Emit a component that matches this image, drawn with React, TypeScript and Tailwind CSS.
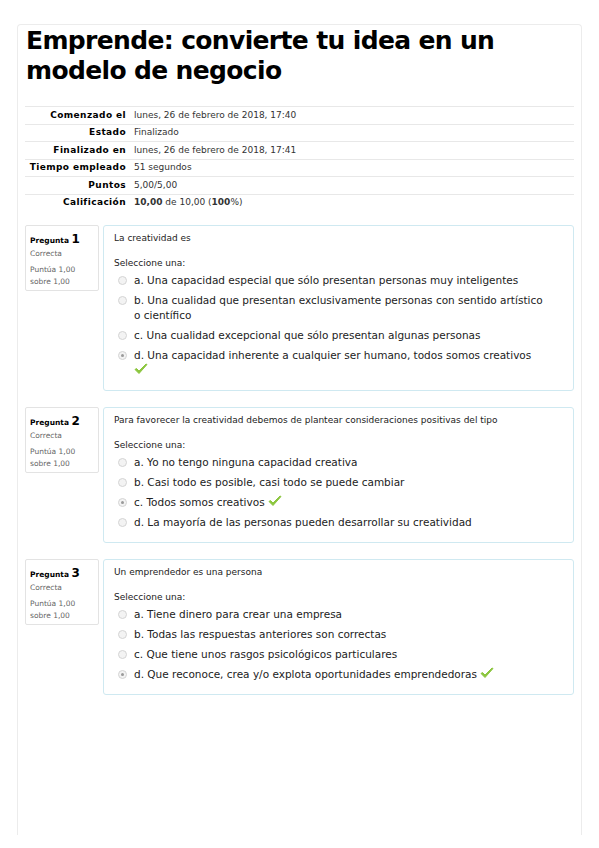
const summary: [string, React.ReactNode][] = [
  ['Comenzado el', 'lunes, 26 de febrero de 2018, 17:40'],
  ['Estado', 'Finalizado'],
  ['Finalizado en', 'lunes, 26 de febrero de 2018, 17:41'],
  ['Tiempo empleado', '51 segundos'],
  ['Puntos', '5,00/5,00'],
  ['Calificación', <><b>10,00</b> de 10,00 (<b>100</b>%)</>],
]

interface Q { n: number; text: string; options: string[]; answer: number }

const questions: Q[] = [
  {
    n: 1,
    text: 'La creatividad es',
    options: [
      'a. Una capacidad especial que sólo presentan personas muy inteligentes',
      'b. Una cualidad que presentan exclusivamente personas con sentido artístico o científico',
      'c. Una cualidad excepcional que sólo presentan algunas personas',
      'd. Una capacidad inherente a cualquier ser humano, todos somos creativos',
    ],
    answer: 3,
  },
  {
    n: 2,
    text: 'Para favorecer la creatividad debemos de plantear consideraciones positivas del tipo',
    options: [
      'a. Yo no tengo ninguna capacidad creativa',
      'b. Casi todo es posible, casi todo se puede cambiar',
      'c. Todos somos creativos',
      'd. La mayoría de las personas pueden desarrollar su creatividad',
    ],
    answer: 2,
  },
  {
    n: 3,
    text: 'Un emprendedor es una persona',
    options: [
      'a. Tiene dinero para crear una empresa',
      'b. Todas las respuestas anteriores son correctas',
      'c. Que tiene unos rasgos psicológicos particulares',
      'd. Que reconoce, crea y/o explota oportunidades emprendedoras',
    ],
    answer: 3,
  },
]

function Check() {
  return (
    <svg width="14" height="12" viewBox="0 0 14 12" className="inline-block align-[-1px]">
      <path d="M1 6.5 L5 10.5 L13 1.5 L12 1 L5 8 L2.5 5.5 Z" fill="#8cc63f" stroke="#8cc63f" strokeWidth="1" strokeLinejoin="round" />
    </svg>
  )
}

function Radio({ on }: { on: boolean }) {
  return (
    <span className="w-[9px] h-[9px] rounded-full border border-[#d4d4d4] bg-[#f3f3f3] flex items-center justify-center shrink-0 mt-[3px]">
      {on && <span className="w-[3px] h-[3px] rounded-full bg-[#9a9a9a]" />}
    </span>
  )
}

function Question({ q }: { q: Q }) {
  return (
    <div className="flex gap-[4px] mb-[16px]">
      <div className="w-[74px] h-[66px] shrink-0 border border-[#e3e3e3] rounded-[2px] px-[4px] pt-[5px] text-[#555]">
        <div className="text-black leading-[14px]">
          <span className="text-[7.5px] font-bold">Pregunta </span>
          <span className="text-[12px] font-bold">{q.n}</span>
        </div>
        <div className="text-[7.5px] leading-[10px] mt-[1px] text-[#666]">Correcta</div>
        <div className="text-[7.5px] leading-[12px] mt-[5px] text-[#666]">Puntúa 1,00<br />sobre 1,00</div>
      </div>
      <div className="flex-1 border border-[#cfe9f1] rounded-[3px] pl-[10px] pr-[26px] pt-[6px] pb-[12px]">
        <div className="text-[9px] leading-[12px] text-[#222]">{q.text}</div>
        <div className="text-[9px] leading-[12px] text-[#222] mt-[13px] mb-[4px]">Seleccione una:</div>
        {q.options.map((o, i) => (
          <div key={o} className="flex gap-[7px] pl-[4px] mb-[5px] last:mb-0">
            <Radio on={i === q.answer} />
            <div className="text-[10.5px] leading-[15px] text-[#222]">
              {o}
              {i === q.answer && <> <Check /></>}
            </div>
          </div>
        ))}
      </div>
    </div>
  )
}

export default function App() {
  return (
    <div className="bg-white w-[599px] h-[848px] pt-[24px] px-[17px] font-['DejaVu_Sans',sans-serif] overflow-hidden">
      <div className="border border-b-0 border-[#ececec] rounded-t-[4px] h-[811px] px-[7px]">
        <h1 className="font-bold text-[25px] leading-[30px] tracking-[-0.65px] text-black px-[1px] mt-[1px]">
          Emprende: convierte tu idea en un modelo de negocio
        </h1>
        <table className="w-full mt-[20px] text-[9px] border-collapse">
          <tbody>
            {summary.map(([k, v]) => (
              <tr key={k} className="border-t border-[#e8e8e8]">
                <th className="h-[17.5px] w-[109px] text-right font-bold tracking-[0.4px] text-black pr-[8px]">{k}</th>
                <td className="h-[17.5px] text-[#333]">{v}</td>
              </tr>
            ))}
          </tbody>
        </table>
        <div className="mt-[13px]">
          {questions.map(q => <Question key={q.n} q={q} />)}
        </div>
      </div>
    </div>
  )
}
